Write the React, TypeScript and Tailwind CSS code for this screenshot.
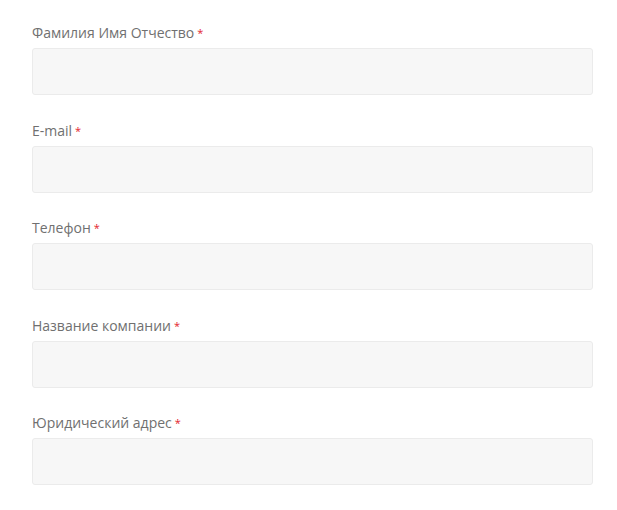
import React from 'react';

const fields = ['Фамилия Имя Отчество', 'E-mail', 'Телефон', 'Название компании', 'Юридический адрес'];

const App: React.FC = () => {
  return (
    <div className="min-h-screen bg-white px-8 pt-[23px]" style={{ fontFamily: '"Open Sans", sans-serif' }}>
      {fields.map((label) => (
        <div key={label} className="mb-[25.5px]">
          <label className="block h-[25px] text-[14px] leading-[20px] text-[#707070]">
            {label}
            <span className="ml-[3px] align-top text-[11px] text-[#e3232c]">*</span>
          </label>
          <input
            type="text"
            className="block h-[47px] w-[561px] rounded-[3px] border border-[#ebebeb] bg-[#f7f7f7] outline-none"
          />
        </div>
      ))}
    </div>
  );
};

export default App;
